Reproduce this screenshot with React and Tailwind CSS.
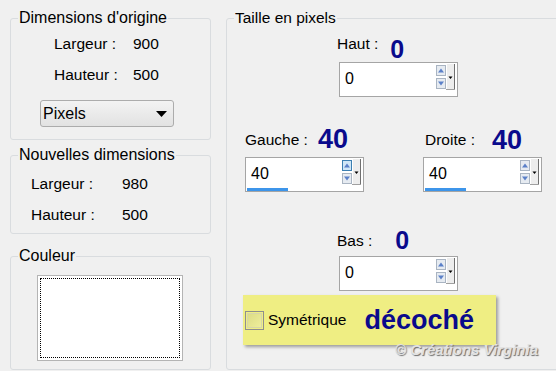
import React from "react";

function Spin({ value, bar = false, hot = false }) {
  return (
    <div className="w-[119px] h-[35px] border border-[#a5a5a5] bg-white flex">
      <div className="flex-1 flex flex-col">
        <div className="h-[30px] flex items-center pt-[2px] pl-[5px] text-[16px] text-black">{value}</div>
        {bar && <div className="ml-[1px] w-[41px] h-[3px] bg-[#3d95ea]" />}
      </div>
      <svg width="21" height="28" className="mr-[1px]" viewBox="0 0 21 28">
        <rect x="1.5" y="2.5" width="9" height="10" fill={hot ? "#cfe6f7" : "#e6ebf1"} stroke={hot ? "#3c7fb1" : "#a9b4c2"} />
        <polygon points="3,9.5 9,9.5 6,5.5" fill="#5b80c8" />
        <rect x="1.5" y="15.5" width="9" height="10" fill="#e6ebf1" stroke="#a9b4c2" />
        <polygon points="3,18.5 9,18.5 6,22.5" fill="#5b80c8" />
        <rect x="11" y="1" width="9" height="26" fill="#ededed" />
        <line x1="11.5" y1="1" x2="11.5" y2="27" stroke="#ffffff" />
        <line x1="19.5" y1="1" x2="19.5" y2="27" stroke="#707070" />
        <line x1="11" y1="26.5" x2="20" y2="26.5" stroke="#a0a0a0" />
        <polygon points="13.5,13.5 17.5,13.5 15.5,16" fill="#000" />
      </svg>
    </div>
  );
}

const big = "font-bold text-[#0a0a8c] leading-[26px]";
const group = "border border-[#d9dcdf] rounded-[3px] px-[7px]";

export default function App() {
  return (
    <div className="w-[556px] h-[371px] bg-[#f0f0f0] flex overflow-hidden relative font-['Liberation_Sans',Arial,sans-serif] text-[15.5px] text-black">
      {/* Left column */}
      <div className="w-[201px] ml-[10px] flex flex-col shrink-0">
        <fieldset className={`mt-[9px] h-[131px] ${group}`}>
          <legend className="px-[1px] leading-[18px] text-[16px]">Dimensions d'origine</legend>
          <div className="mt-[7px] h-[20px] flex items-center">
            <span className="ml-[36px] w-[79px]">Largeur :</span>
            <span>900</span>
          </div>
          <div className="mt-[11px] h-[20px] flex items-center">
            <span className="ml-[36px] w-[79px]">Hauteur :</span>
            <span>500</span>
          </div>
          <div className="mt-[15px] ml-[22px] w-[134px] h-[27px] border border-[#acacac] rounded-[3px] bg-gradient-to-b from-[#f3f3f3] to-[#e2e2e2] flex items-center justify-between pl-[2px] pr-[6px]">
            <span className="text-[16px]">Pixels</span>
            <svg width="11" height="6" viewBox="0 0 11 6">
              <polygon points="0,0 11,0 5.5,6" fill="#000" />
            </svg>
          </div>
        </fieldset>

        <fieldset className={`mt-[6px] h-[88px] ${group}`}>
          <legend className="px-[1px] leading-[18px] text-[16px]">Nouvelles dimensions</legend>
          <div className="mt-[10px] h-[20px] flex items-center">
            <span className="ml-[13px] w-[91px]">Largeur :</span>
            <span>980</span>
          </div>
          <div className="mt-[11px] h-[20px] flex items-center">
            <span className="ml-[13px] w-[91px]">Hauteur :</span>
            <span>500</span>
          </div>
        </fieldset>

        <fieldset className={`mt-[13px] h-[123px] ${group}`}>
          <legend className="px-[1px] leading-[18px] text-[16px]">Couleur</legend>
          <div className="mt-[10px] ml-[19px] w-[146px] h-[86px] border border-[#b4b4b4] bg-white p-[2px]">
            <div className="w-full h-full border border-dotted border-black" />
          </div>
        </fieldset>
      </div>

      {/* Right group */}
      <fieldset className={`ml-[15px] mt-[9px] h-[361px] w-[340px] shrink-0 ${group}`}>
        <legend className="px-[1px] leading-[18px]">Taille en pixels</legend>

        <div className="h-[35px] flex items-end">
          <span className="ml-[103px] pb-[9px] leading-[18px]">Haut :</span>
          <span className={`ml-[12px] text-[25px] ${big}`}>0</span>
        </div>
        <div className="ml-[105px]">
          <Spin value="0" />
        </div>

        <div className="flex ml-[11px]">
          <div className="flex flex-col">
            <div className="h-[60px] flex items-end">
              <span className="pb-[8px] leading-[18px]">Gauche :</span>
              <span className={`ml-[10px] pb-[5px] text-[27px] ${big}`}>40</span>
            </div>
            <Spin value="40" bar hot />
          </div>
          <div className="flex flex-col ml-[59px]">
            <div className="h-[60px] flex items-end">
              <span className="pl-[2px] pb-[8px] leading-[18px]">Droite :</span>
              <span className={`ml-[17px] pb-[4px] text-[27px] ${big}`}>40</span>
            </div>
            <Spin value="40" bar />
          </div>
        </div>

        <div className="h-[64px] flex items-end">
          <span className="ml-[103px] pb-[6px] leading-[18px]">Bas :</span>
          <span className={`ml-[23px] pb-[3px] text-[25px] ${big}`}>0</span>
        </div>
        <div className="ml-[105px]">
          <Spin value="0" />
        </div>
      </fieldset>

      {/* Annotation overlay */}
      <div className="absolute left-[243px] top-[295px] w-[253px] h-[50px] bg-[#efee83] shadow-[2px_2px_3px_rgba(0,0,0,0.35)] flex items-center">
        <div className="ml-[2px] w-[19px] h-[19px] border border-[#8e8e8e] p-[1px]">
          <div className="w-full h-full border border-[#d6d6a8] bg-gradient-to-br from-[#dcdc86] to-[#eeee9a]" />
        </div>
        <span className="ml-[4px]">Symétrique</span>
        <span className="ml-[18px] text-[27px] font-bold text-[#0a0a8c] leading-[30px]">décoché</span>
      </div>

      {/* Watermark */}
      <div className="absolute left-[395px] top-[341px] text-[15px] font-bold italic text-[#e2e2e2] leading-[18px] [text-shadow:1px_1px_1px_#6e6e6e]">
        © Créations Virginia
      </div>
    </div>
  );
}
